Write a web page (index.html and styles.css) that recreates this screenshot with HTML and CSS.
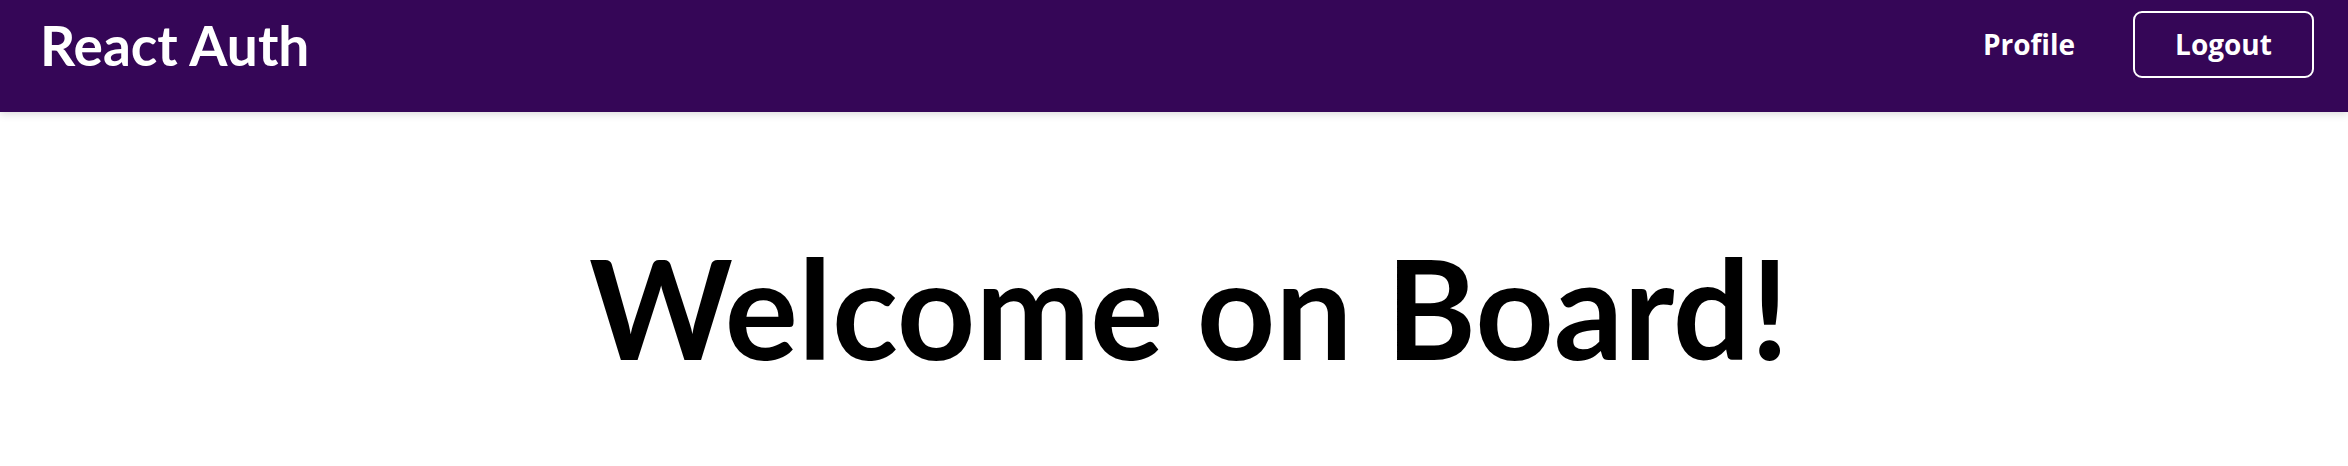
FILE: index.html
```html
<!DOCTYPE html>
<html>
<head>
<meta charset="utf-8">
<link rel="stylesheet" href="styles.css">
</head>
<body>
<header class="header">
  <div class="logo">React Auth</div>
  <nav class="nav">
    <a class="nav-link" href="#">Profile</a>
    <button class="logout">Logout</button>
  </nav>
</header>
<main class="main">
  <h1 class="welcome">Welcome on Board!</h1>
</main>
</body>
</html>
```
FILE: styles.css
```css
* { box-sizing: border-box; }
body {
  margin: 0;
  font-family: "Lato", sans-serif;
  background: #fff;
}
.header {
  height: 112px;
  background: #350657;
  display: flex;
  align-items: center;
  justify-content: space-between;
  padding: 0 34px 0 40px;
  box-shadow: 0 2px 8px rgba(0,0,0,0.15);
}
.logo {
  color: #fff;
  font-family: "Lato", sans-serif;
  font-weight: 700;
  font-size: 55px;
  line-height: 1;
  margin-top: -22px;
}
.nav {
  display: flex;
  align-items: center;
  gap: 58px;
  margin-top: -24px;
}
.nav-link {
  color: #fff;
  text-decoration: none;
  font-family: "Open Sans", sans-serif;
  font-weight: 700;
  font-size: 28px;
}
.logout {
  width: 181px;
  height: 67px;
  background: transparent;
  border: 2px solid #fff;
  border-radius: 9px;
  color: #fff;
  font-family: "Open Sans", sans-serif;
  font-weight: 700;
  font-size: 28px;
  padding: 0;
  cursor: pointer;
}
.main {
  display: flex;
  justify-content: center;
}
.welcome {
  margin: 127px 0 0 30px;
  font-family: "Lato", sans-serif;
  font-weight: 700;
  font-size: 137px;
  line-height: 1;
  color: #000;
}
```
